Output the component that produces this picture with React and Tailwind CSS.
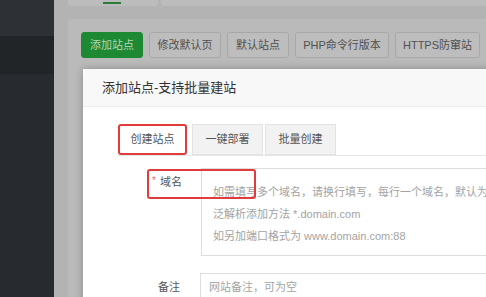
import React from "react";

const FONT = "font-['Liberation_Sans','Noto_Sans_CJK_SC',sans-serif]";

function ToolButton({ children, primary, className = "" }) {
  return (
    <div
      className={`h-[26px] flex items-center justify-center shrink-0 rounded-[3px] border text-[11px] whitespace-nowrap ${className} ${
        primary
          ? "bg-[#1d8a33] border-[#1d8a33] text-[#b3d6b9]"
          : "bg-[#bdbdbd] border-[#a8a8a8] text-[#505050]"
      }`}
    >
      {children}
    </div>
  );
}

function Tab({ children, active }) {
  return (
    <div
      className={`h-[31px] flex items-center justify-center text-[11px] text-[#555] ${
        active
          ? "w-[69px] bg-white border-2 border-[#e23b3b] rounded-[3px]"
          : "w-[71px] bg-[#f2f2f2] border border-[#e3e3e3]"
      }`}
    >
      {children}
    </div>
  );
}

export default function App() {
  return (
    <div className={`w-[486px] h-[297px] overflow-hidden flex ${FONT}`}>
      {/* Sidebar */}
      <aside className="w-[54px] flex flex-col shrink-0">
        <div className="h-[36px] bg-[#2d3135]" />
        <div className="h-[38px] bg-[#212528]" />
        <div className="flex-1 bg-[#272b2f]" />
      </aside>

      {/* Dimmed page */}
      <main className="flex-1 relative bg-[#b3b3b3] pl-[14px] flex flex-col">
        <div className="h-[6px] flex gap-[3px]">
          <div className="w-[90px] bg-[#bcbcbc] rounded-b-[3px] relative">
            <div className="absolute left-[35px] top-[2px] w-[18px] h-[2px] bg-[#2b7a3a]" />
          </div>
          <div className="flex-1 bg-[#bcbcbc] rounded-bl-[3px]" />
        </div>

        <div className="mt-[13px] flex-1 bg-[#bababa] rounded-tl-[3px] pl-[13px] pt-[13px]">
          <div className="flex gap-[6px]">
            <ToolButton primary className="w-[62px]">添加站点</ToolButton>
            <ToolButton className="w-[72px]">修改默认页</ToolButton>
            <ToolButton className="w-[62px]">默认站点</ToolButton>
            <ToolButton className="w-[94px]">PHP命令行版本</ToolButton>
            <ToolButton className="w-[85px]">HTTPS防窜站</ToolButton>
          </div>
        </div>

        {/* Modal */}
        <div className="absolute left-[29px] top-[69px] w-[440px] h-[260px] bg-white shadow-[0_0_8px_rgba(0,0,0,0.25)]">
          <div className="h-[38px] bg-[#f8f8f8] border-b border-[#ececec] pl-[19px] flex items-center text-[13px] text-[#333]">
            添加站点-支持批量建站
          </div>

          <div className="pl-[35px] pt-[17px]">
            <div className="flex items-end gap-[2px] border-b border-[#e6e6e6] h-[32px]">
              <Tab active>创建站点</Tab>
              <div className="ml-[1px]" />
              <Tab>一键部署</Tab>
              <Tab>批量创建</Tab>
            </div>

            <div className="mt-[12px] flex">
              <div className="w-[83px] h-[29px] flex items-center justify-end pr-[19px] text-[11px] text-[#555]">
                <span className="text-[#e86b6b] mr-[4px] -mt-[5px] text-[10px]">*</span>
                域名
              </div>
              <div className="flex-1 h-[88px] border border-[#dedede] pl-[11px] pt-[12px] text-[11px] leading-[22px] text-[#a3a3a3] whitespace-nowrap overflow-hidden">
                <div>如需填写多个域名，请换行填写，每行一个域名，默认为80端口</div>
                <div>泛解析添加方法 *.domain.com</div>
                <div>如另加端口格式为 www.domain.com:88</div>
              </div>
            </div>

            <div className="mt-[17px] flex">
              <div className="w-[82px] h-[28px] flex items-center justify-end pr-[20px] text-[11px] text-[#555]">
                备注
              </div>
              <div className="flex-1 h-[28px] border border-[#dedede] pl-[8px] flex items-center text-[11px] text-[#a3a3a3] whitespace-nowrap overflow-hidden">
                网站备注，可为空
              </div>
            </div>
          </div>

          {/* Annotation box */}
          <div className="absolute left-[64px] top-[100px] w-[109px] h-[30px] border-2 border-[#e23b3b] rounded-[3px]" />
        </div>
      </main>
    </div>
  );
}
